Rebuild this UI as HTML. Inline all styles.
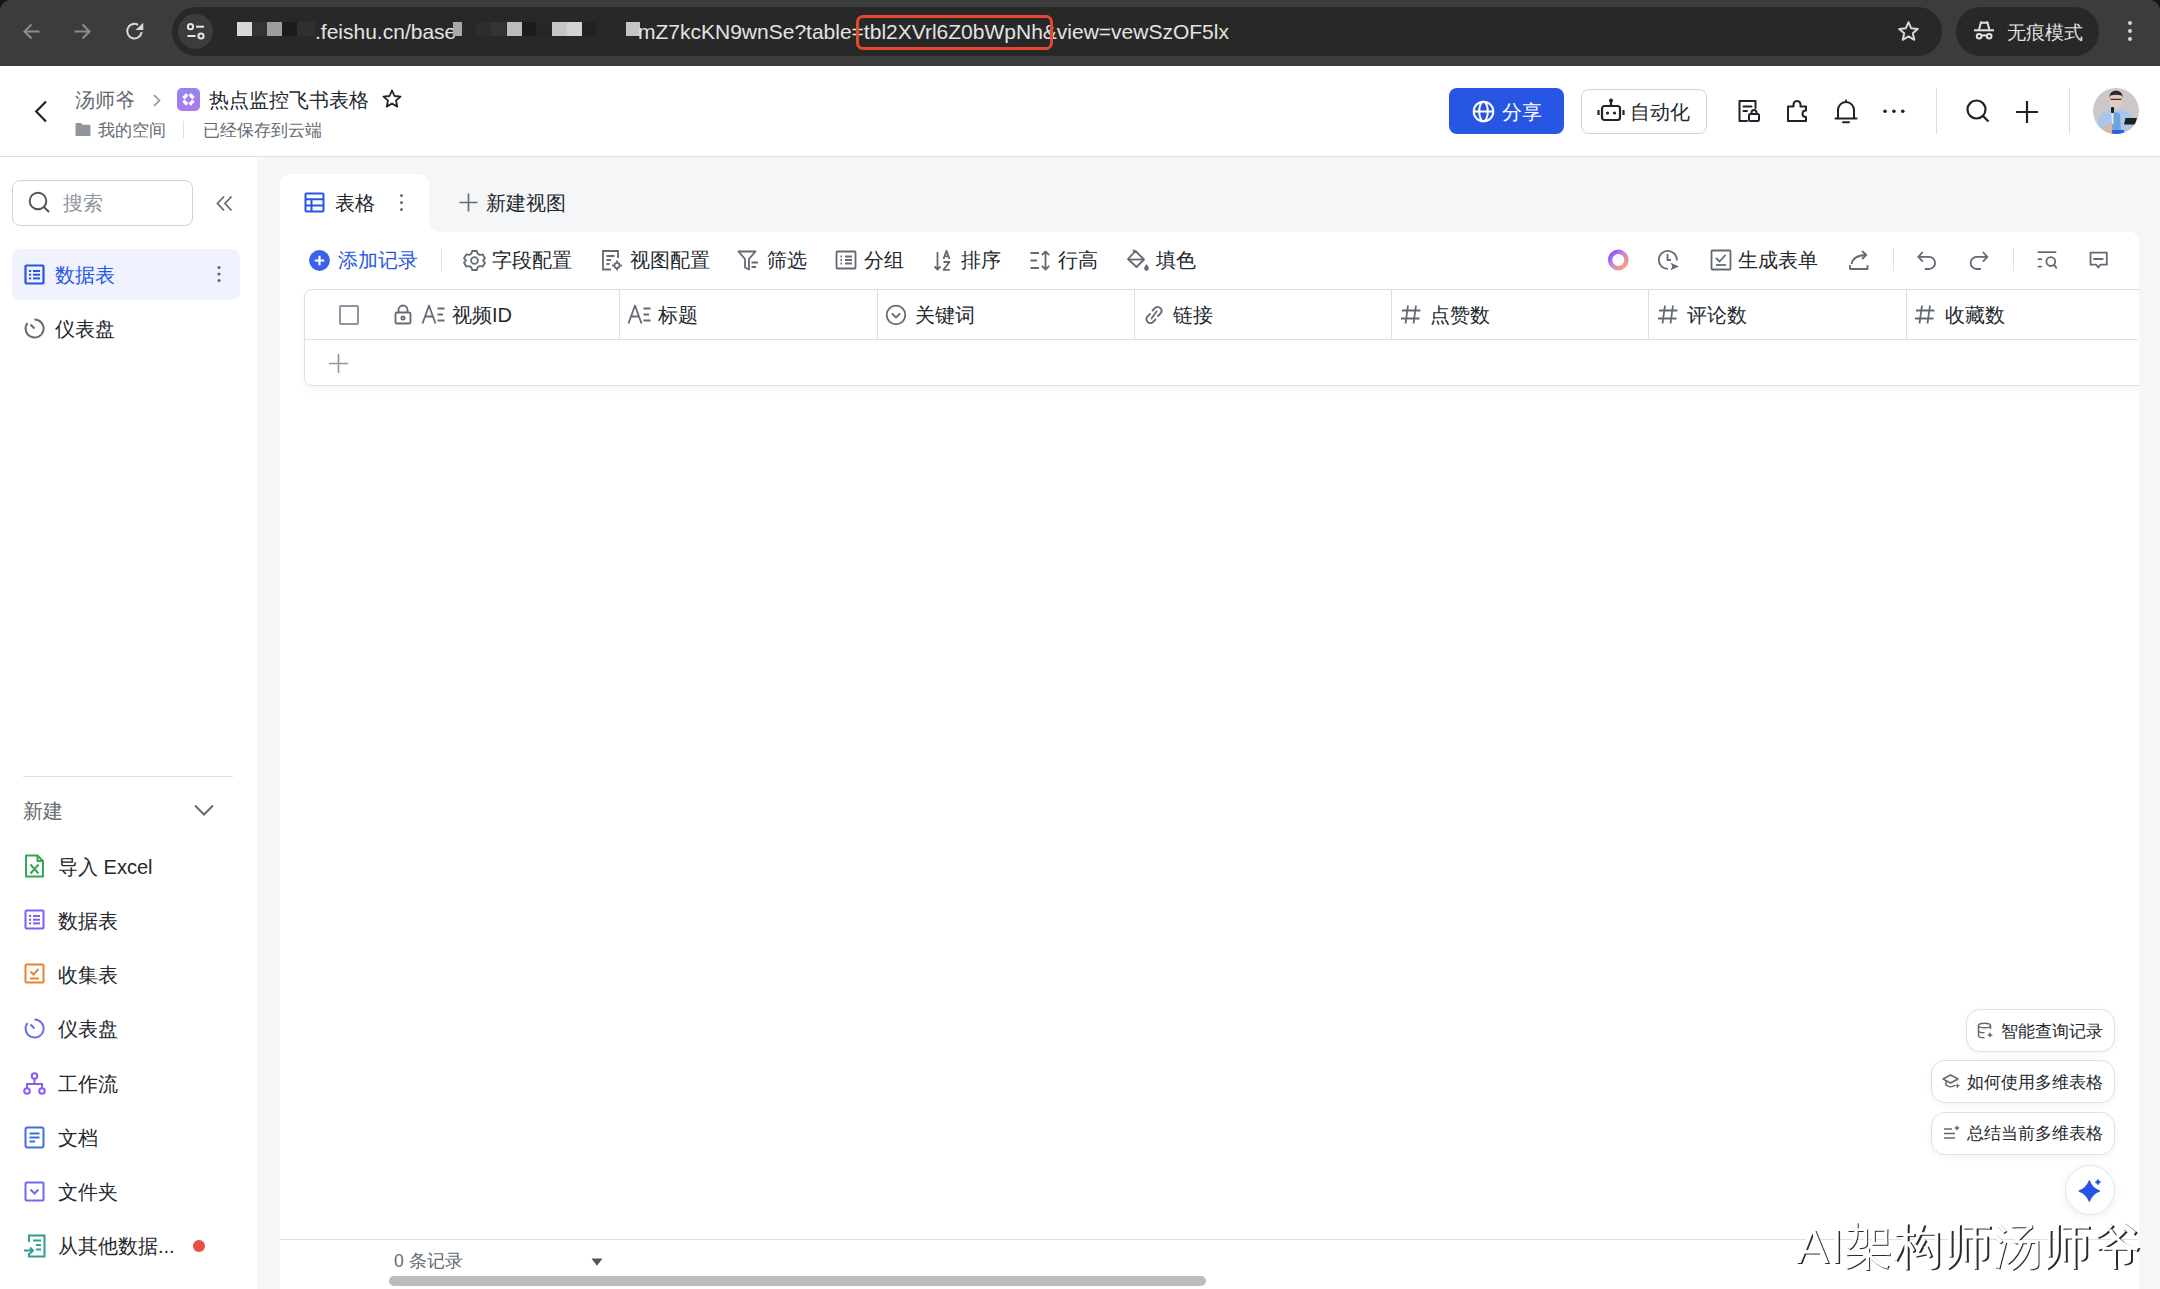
<!DOCTYPE html>
<html><head><meta charset="utf-8">
<style>
*{box-sizing:border-box;margin:0;padding:0}
html,body{width:2160px;height:1289px;overflow:hidden;background:#fff;font-family:"Liberation Sans",sans-serif;color:#24282e}
.a{position:absolute}
.t{position:absolute;white-space:nowrap;line-height:1}
svg{position:absolute;overflow:visible}
#chrome{left:0;top:0;width:2160px;height:66px;background:#3c3c3c}
#url{left:172px;top:7px;width:1770px;height:49px;border-radius:25px;background:#282828}
#hdr{left:0;top:66px;width:2160px;height:91px;background:#fff;border-bottom:1px solid #dee0e3}
#side{left:0;top:157px;width:257px;height:1132px;background:#fff}
#grey{left:257px;top:157px;width:1903px;height:1132px;background:#f5f6f8}
#card{left:280px;top:232px;width:1859px;height:1057px;background:#fff;border-radius:0 9px 0 0}
#tab{left:280px;top:174px;width:149px;height:62px;background:#fff;border-radius:10px 10px 0 0}
.g{color:#646a73}
</style></head><body>
<div id="chrome" class="a"></div>

<!-- CHROME -->
<div class="a" style="left:0;top:0;width:10px;height:10px;background:#151515;"></div>
<div class="a" style="left:0;top:0;width:20px;height:20px;background:#3c3c3c;border-radius:10px 0 0 0"></div>
<div class="a" style="left:2150px;top:0;width:10px;height:10px;background:#151515;"></div>
<div class="a" style="left:2140px;top:0;width:20px;height:20px;background:#3c3c3c;border-radius:0 10px 0 0"></div>
<svg style="left:22px;top:22px" width="19" height="19" viewBox="0 0 19 19"><path d="M17.5 9.5H2.5M9.5 2.5L2.5 9.5L9.5 16.5" fill="none" stroke="#8c8c8c" stroke-width="2"/></svg>
<svg style="left:73px;top:22px" width="19" height="19" viewBox="0 0 19 19"><path d="M1.5 9.5H16.5M9.5 2.5L16.5 9.5L9.5 16.5" fill="none" stroke="#8c8c8c" stroke-width="2"/></svg>
<svg style="left:125px;top:22px" width="19" height="19" viewBox="0 0 19 19"><path d="M16.7 10.2A7.3 7.3 0 1 1 13.05 2.78" fill="none" stroke="#d9d9d9" stroke-width="2"/><path d="M10.5 8L18.3 8L18.3 0.8Z" fill="#d9d9d9"/></svg>
<div id="url" class="a"></div>
<div class="a" style="left:178px;top:14px;width:35px;height:35px;border-radius:50%;background:#3c3c3c"></div>
<svg style="left:185px;top:21px" width="21" height="20" viewBox="0 0 21 20"><circle cx="5.5" cy="5.7" r="2.6" fill="none" stroke="#e6e6e6" stroke-width="2"/><path d="M11 5.7H19" stroke="#e6e6e6" stroke-width="2"/><circle cx="16" cy="15" r="2.6" fill="none" stroke="#e6e6e6" stroke-width="2"/><path d="M2.5 15H10.5" stroke="#e6e6e6" stroke-width="2"/></svg>
<div class="a" style="left:237px;top:22px;width:15px;height:14px;background:#d8d8d8"></div>
<div class="a" style="left:252px;top:22px;width:15px;height:14px;background:#333333"></div>
<div class="a" style="left:267px;top:22px;width:15px;height:14px;background:#9d9d9d"></div>
<div class="a" style="left:282px;top:22px;width:15px;height:14px;background:#1c1c1c"></div>
<div class="a" style="left:297px;top:22px;width:18px;height:14px;background:#303030"></div>
<div class="t" style="left:315px;top:21px;font-size:21px;color:#e3e3e3">.feishu.cn/base</div>
<div class="a" style="left:453px;top:22px;width:9px;height:14px;background:#a8a8a8"></div>
<div class="a" style="left:476px;top:22px;width:15px;height:14px;background:#2d2d2d"></div>
<div class="a" style="left:491px;top:22px;width:15px;height:14px;background:#343434"></div>
<div class="a" style="left:507px;top:22px;width:15px;height:14px;background:#bcbcbc"></div>
<div class="a" style="left:522px;top:22px;width:14px;height:14px;background:#1c1c1c"></div>
<div class="a" style="left:536px;top:22px;width:16px;height:14px;background:#262626"></div>
<div class="a" style="left:552px;top:22px;width:15px;height:14px;background:#c6c6c6"></div>
<div class="a" style="left:567px;top:22px;width:15px;height:14px;background:#d3d3d3"></div>
<div class="a" style="left:582px;top:22px;width:14px;height:14px;background:#222222"></div>
<div class="a" style="left:626px;top:22px;width:14px;height:14px;background:#c4c4c4"></div>
<div class="t" style="left:638px;top:21px;font-size:21px;color:#e3e3e3">mZ7kcKN9wnSe?table=tbl2XVrl6Z0bWpNh&amp;view=vewSzOF5lx</div>
<div class="a" style="left:856px;top:15px;width:197px;height:35px;border:3px solid #e5472f;border-radius:7px"></div>
<svg style="left:1897px;top:20px" width="23" height="23" viewBox="0 0 23 23"><path d="M11.5 2.2L14.2 8.3L20.8 8.9L15.8 13.3L17.3 19.8L11.5 16.4L5.7 19.8L7.2 13.3L2.2 8.9L8.8 8.3Z" fill="none" stroke="#d6d6d6" stroke-width="2" stroke-linejoin="round"/></svg>
<div class="a" style="left:1956px;top:7px;width:143px;height:49px;border-radius:25px;background:#282828"></div>
<svg style="left:1970px;top:18px" width="28" height="24" viewBox="0 0 28 24"><g fill="none" stroke="#e3e3e3" stroke-width="2" stroke-linejoin="round"><path d="M4 12.3H24"/><path d="M9 11.5L11 4.2Q14 5.4 17.4 4.2L19.3 11.5"/><circle cx="9.1" cy="18.2" r="2.3"/><circle cx="19.2" cy="18.2" r="2.3"/><path d="M11.4 17.9Q14.15 16.6 16.9 17.9"/></g></svg>
<div class="t" style="left:2007px;top:24px;font-size:18.5px;color:#e3e3e3">无痕模式</div>
<div class="a" style="left:2128px;top:21px;width:4px;height:4px;border-radius:2px;background:#d6d6d6"></div>
<div class="a" style="left:2128px;top:29px;width:4px;height:4px;border-radius:2px;background:#d6d6d6"></div>
<div class="a" style="left:2128px;top:37px;width:4px;height:4px;border-radius:2px;background:#d6d6d6"></div>

<div id="hdr" class="a"></div>
<!-- HEADER -->
<svg style="left:34px;top:100px" width="14" height="23" viewBox="0 0 14 23"><path d="M12 1.5L2.2 11.5L12 21.5" fill="none" stroke="#1f2329" stroke-width="2.2"/></svg>
<div class="t g" style="left:75px;top:90px;font-size:20px">汤师爷</div>
<svg style="left:152px;top:94px" width="10" height="13" viewBox="0 0 10 13"><path d="M2 1.2L7.5 6.5L2 11.8" fill="none" stroke="#8f959e" stroke-width="1.6"/></svg>
<div class="a" style="left:177px;top:88px;width:23px;height:23px;border-radius:5px;background:linear-gradient(160deg,#9384f4,#b07be9)"></div>
<svg style="left:177px;top:88px" width="23" height="23" viewBox="0 0 23 23"><g fill="#fff"><rect x="5.60" y="6.58" width="5.5" height="3.35" rx="0.7" transform="rotate(-45 8.35 8.25)"/><rect x="11.90" y="6.58" width="5.5" height="3.35" rx="0.7" transform="rotate(45 14.65 8.25)"/><rect x="11.90" y="12.88" width="5.5" height="3.35" rx="0.7" transform="rotate(-45 14.65 14.55)"/><rect x="5.60" y="12.88" width="5.5" height="3.35" rx="0.7" transform="rotate(45 8.35 14.55)"/></g></svg>
<div class="t" style="left:209px;top:90px;font-size:20px">热点监控飞书表格</div>
<svg style="left:381px;top:88px" width="22" height="22" viewBox="0 0 22 22"><path d="M11 2.5L13.5 8L19.5 8.6L15 12.6L16.3 18.6L11 15.5L5.7 18.6L7 12.6L2.5 8.6L8.5 8Z" fill="none" stroke="#1f2329" stroke-width="1.8" stroke-linejoin="round"/></svg>
<svg style="left:75px;top:122px" width="16" height="15" viewBox="0 0 16 15"><path d="M0.5 2.2Q0.5 1 1.7 1H6L7.5 2.8H14.3Q15.5 2.8 15.5 4V13Q15.5 14 14.3 14H1.7Q0.5 14 0.5 13Z" fill="#8f959e"/></svg>
<div class="t g" style="left:98px;top:122px;font-size:17px">我的空间</div>
<div class="a" style="left:183px;top:121px;width:1px;height:17px;background:#dee0e3"></div>
<div class="t g" style="left:203px;top:122px;font-size:17px">已经保存到云端</div>

<div class="a" style="left:1449px;top:88px;width:115px;height:46px;border-radius:8px;background:#2756e5"></div>
<svg style="left:1472px;top:100px" width="23" height="23" viewBox="0 0 23 23"><g fill="none" stroke="#fff" stroke-width="2"><circle cx="11.5" cy="11.5" r="9.8"/><ellipse cx="11.5" cy="11.5" rx="4.3" ry="9.8"/><path d="M1.7 11.5H21.3"/></g></svg>
<div class="t" style="left:1502px;top:102px;font-size:20px;color:#fff">分享</div>
<div class="a" style="left:1581px;top:89px;width:126px;height:45px;border-radius:8px;border:1px solid #d0d3d6;background:#fff"></div>
<svg style="left:1597px;top:98px" width="28" height="24" viewBox="0 0 28 24"><g fill="none" stroke="#1f2329" stroke-width="2.2"><rect x="5" y="8" width="18" height="14" rx="2.5"/><path d="M14 8V3"/><path d="M1.5 12V17M26.5 12V17"/></g><circle cx="14" cy="2.5" r="2" fill="#1f2329"/><circle cx="10.5" cy="15" r="1.6" fill="#1f2329"/><circle cx="17.5" cy="15" r="1.6" fill="#1f2329"/></svg>
<div class="t" style="left:1630px;top:102px;font-size:20px">自动化</div>
<svg style="left:1737px;top:99px" width="24" height="24" viewBox="0 0 24 24"><g fill="none" stroke="#1f2329" stroke-width="2" stroke-linejoin="round" stroke-linecap="round"><path d="M10 22H2.5V2H18.5V9"/><path d="M6.5 7.5H14.5"/><path d="M6.5 12H10"/><rect x="12" y="15" width="10" height="7" rx="1.3"/><path d="M14.5 15V13.5A2.5 2.5 0 0 1 19.5 13.5V15"/></g></svg>
<svg style="left:1786px;top:99px" width="23" height="24" viewBox="0 0 23 24"><path d="M2 7.5H7.5Q7 2 11 2Q15 2 14.5 7.5H20V11.5Q16.5 11.5 16.5 14.75Q16.5 18 20 18V22H2Z" fill="none" stroke="#1f2329" stroke-width="2" stroke-linejoin="round" stroke-linecap="round" stroke-linejoin="round"/></svg>
<svg style="left:1834px;top:99px" width="24" height="25" viewBox="0 0 24 25"><g fill="none" stroke="#1f2329" stroke-width="2" stroke-linejoin="round" stroke-linecap="round"><path d="M4 19V11A8 8 0 0 1 20 11V19"/><path d="M1.5 19.5H22.5"/><path d="M9 23.2H15"/><path d="M12 1.5V3"/></g></svg>
<svg style="left:1880px;top:107px" width="28" height="8" viewBox="0 0 28 8"><g fill="#1f2329"><circle cx="5" cy="4.2" r="1.8"/><circle cx="13.9" cy="4.2" r="1.8"/><circle cx="22.8" cy="4.2" r="1.8"/></g></svg>
<div class="a" style="left:1936px;top:88px;width:1px;height:46px;background:#dee0e3"></div>
<svg style="left:1966px;top:99px" width="24" height="24" viewBox="0 0 24 24"><g fill="none" stroke="#1f2329" stroke-width="2.2"><circle cx="10.5" cy="10.5" r="9"/><path d="M17 17L22.5 22.5"/></g></svg>
<svg style="left:2015px;top:100px" width="24" height="24" viewBox="0 0 24 24"><path d="M12 1V23M1 12H23" fill="none" stroke="#1f2329" stroke-width="2.2"/></svg>
<div class="a" style="left:2069px;top:88px;width:1px;height:46px;background:#dee0e3"></div>
<svg style="left:2093px;top:88px;filter:blur(0.5px)" width="46" height="46" viewBox="0 0 46 46"><defs><clipPath id="avc"><circle cx="23" cy="23" r="23"/></clipPath></defs><g clip-path="url(#avc)">
<rect width="46" height="46" fill="#cdc8c7"/>
<path d="M4 46L5 31Q8 24 15 22.5L19 22L27 21.5L33 23Q38 25 40 31L42 46Z" fill="#aac6e8"/>
<path d="M19 26L23 24L27 26L28 46H17Z" fill="#6ea3e2"/>
<path d="M10 46L11 38Q16 35 19 37L20 46Z" fill="#d9b8aa"/>
<rect x="17" y="5.5" width="12" height="15" rx="5.5" fill="#e6cbbd"/>
<path d="M16.5 10Q16 3 23 2.5Q30 3 29.5 10L28.5 7.5Q23 6 17.5 7.5Z" fill="#2d2825"/>
<path d="M17.5 11.3H28.5" stroke="#3a3330" stroke-width="1.2"/>
<rect x="18" y="19" width="3" height="6" rx="1" fill="#1d1d1d"/>
<rect x="18.5" y="25" width="2" height="11" fill="#e8e8ea"/>
<path d="M32.5 30H44L42 36.5H31Z" fill="#202020"/>
<rect x="19" y="42" width="12" height="4" fill="#2d5fd6"/>
</g></svg>
</div>

<div id="side" class="a"></div>
<!-- SIDEBAR -->
<div class="a" style="left:12px;top:180px;width:181px;height:46px;border-radius:8px;border:1px solid #d0d3d6"></div>
<svg style="left:28px;top:191px" width="23" height="23" viewBox="0 0 23 23"><g fill="none" stroke="#4e5358" stroke-width="1.9"><circle cx="10" cy="10" r="8.3"/><path d="M16 16L21 21"/></g></svg>
<div class="t" style="left:63px;top:193px;font-size:20px;color:#8f959e">搜索</div>
<svg style="left:215px;top:195px" width="19" height="17" viewBox="0 0 19 17"><path d="M9 1.5L2.5 8.5L9 15.5M16.5 1.5L10 8.5L16.5 15.5" fill="none" stroke="#646a73" stroke-width="1.8"/></svg>
<div class="a" style="left:12px;top:249px;width:228px;height:51px;border-radius:8px;background:#f0f3fe"></div>
<svg style="left:24px;top:264px" width="21" height="21" viewBox="0 0 21 21"><g fill="none" stroke="#2756e5" stroke-width="2.2"><rect x="1.5" y="1.5" width="18" height="18" rx="1"/></g><g fill="#2756e5"><rect x="5" y="6" width="2.2" height="2"/><rect x="9" y="6" width="7" height="2"/><rect x="5" y="9.7" width="2.2" height="2"/><rect x="9" y="9.7" width="7" height="2"/><rect x="5" y="13.4" width="2.2" height="2"/><rect x="9" y="13.4" width="7" height="2"/></g></svg>
<div class="t" style="left:55px;top:265px;font-size:20px;color:#2756e5">数据表</div>
<svg style="left:214px;top:262px" width="10" height="24" viewBox="0 0 10 24"><g fill="#646a73"><circle cx="5" cy="5.5" r="1.6"/><circle cx="5" cy="12" r="1.6"/><circle cx="5" cy="18.5" r="1.6"/></g></svg>
<svg style="left:24px;top:318px" width="21" height="21" viewBox="0 0 21 21"><g fill="none" stroke="#646a73" stroke-width="2"><path d="M10.5 1.5A9 9 0 1 1 3.5 5"/><path d="M6.5 6.5L10.5 10.5"/></g></svg>
<div class="t" style="left:55px;top:319px;font-size:20px">仪表盘</div>

<div class="a" style="left:23px;top:776px;width:210px;height:1px;background:#dee0e3"></div>
<div class="t g" style="left:23px;top:801px;font-size:20px">新建</div>
<svg style="left:193px;top:803px" width="22" height="14" viewBox="0 0 22 14"><path d="M2 2.5L11 11.5L20 2.5" fill="none" stroke="#646a73" stroke-width="2"/></svg>

<svg style="left:24px;top:854px" width="21" height="24" viewBox="0 0 21 24"><g fill="none" stroke="#34a853" stroke-width="2" stroke-linejoin="round"><path d="M2 1.5H13.5L19 7V22.5H2Z"/><path d="M13.5 1.5V7H19"/><path d="M6.5 10.5L14.5 19.5M14.5 10.5L6.5 19.5"/></g></svg>
<div class="t" style="left:58px;top:857px;font-size:20px">导入 Excel</div>
<svg style="left:24px;top:909px" width="21" height="21" viewBox="0 0 21 21"><g fill="none" stroke="#7f5ff0" stroke-width="2"><rect x="1.5" y="1.5" width="18" height="18" rx="1"/></g><g fill="#7f5ff0"><rect x="5" y="6" width="2.2" height="2"/><rect x="9" y="6" width="7" height="2"/><rect x="5" y="9.7" width="2.2" height="2"/><rect x="9" y="9.7" width="7" height="2"/><rect x="5" y="13.4" width="2.2" height="2"/><rect x="9" y="13.4" width="7" height="2"/></g></svg>
<div class="t" style="left:58px;top:911px;font-size:20px">数据表</div>
<svg style="left:24px;top:963px" width="21" height="21" viewBox="0 0 21 21"><g fill="none" stroke="#e6832d" stroke-width="2"><rect x="1.5" y="1.5" width="18" height="18" rx="1"/><path d="M6.5 8.5L9.5 11.5L14.5 6"/><path d="M6 15.5H15"/></g></svg>
<div class="t" style="left:58px;top:965px;font-size:20px">收集表</div>
<svg style="left:24px;top:1018px" width="21" height="21" viewBox="0 0 21 21"><g fill="none" stroke="#6b6cf0" stroke-width="2"><path d="M10.5 1.5A9 9 0 1 1 3.5 5"/><path d="M6.5 6.5L10.5 10.5"/></g></svg>
<div class="t" style="left:58px;top:1019px;font-size:20px">仪表盘</div>
<svg style="left:23px;top:1072px" width="23" height="23" viewBox="0 0 23 23"><g fill="none" stroke="#8a5cf0" stroke-width="2"><circle cx="11.5" cy="4" r="2.8"/><circle cx="4" cy="19" r="2.8"/><circle cx="19" cy="19" r="2.8"/><path d="M11.5 6.8V12M4 16.2V12H19V16.2"/></g></svg>
<div class="t" style="left:58px;top:1074px;font-size:20px">工作流</div>
<svg style="left:24px;top:1126px" width="21" height="23" viewBox="0 0 21 23"><g fill="none" stroke="#3f6ee8" stroke-width="2"><rect x="1.5" y="1.5" width="18" height="20" rx="2"/><path d="M5.5 7.5H15.5M5.5 11.5H15.5M5.5 15.5H11"/></g></svg>
<div class="t" style="left:58px;top:1128px;font-size:20px">文档</div>
<svg style="left:24px;top:1181px" width="21" height="21" viewBox="0 0 21 21"><g fill="none" stroke="#6b6cf0" stroke-width="2"><rect x="1.5" y="1.5" width="18" height="18" rx="1"/><path d="M6.5 8.5L10.5 12.5L14.5 8.5"/></g></svg>
<div class="t" style="left:58px;top:1182px;font-size:20px">文件夹</div>
<svg style="left:23px;top:1234px" width="23" height="24" viewBox="0 0 23 24"><g fill="none" stroke="#2f9e8f" stroke-width="2"><path d="M6 8V1.5H21.5V22.5H6V19"/><path d="M10 6.5H18M13 11H18M13 15.5H18"/><path d="M1 16.5H10M7 13.5L10 16.5L7 19.5"/></g></svg>
<div class="t" style="left:58px;top:1236px;font-size:20px">从其他数据...</div>
<div class="a" style="left:193px;top:1240px;width:12px;height:12px;border-radius:50%;background:#e84d3d"></div>

<div id="grey" class="a"></div>
<div id="tab" class="a"></div>
<div id="card" class="a"></div>
<div id="card" class="a"></div>
<div class="a" style="left:429px;top:220px;width:12px;height:13px;background:#fff"></div>
<div class="a" style="left:429px;top:208px;width:24px;height:24px;border-radius:0 0 0 12px;background:#f5f6f8"></div>
<!-- TAB -->
<svg style="left:304px;top:192px" width="21" height="21" viewBox="0 0 21 21"><g fill="none" stroke="#2756e5" stroke-width="2"><rect x="1.5" y="1.5" width="18" height="18" rx="1"/><path d="M1.5 7.3H19.5M1.5 13.5H19.5M7.5 7.3V19.5"/></g></svg>
<div class="t" style="left:335px;top:193px;font-size:20px">表格</div>
<div class="a" style="left:400px;top:194px;width:3px;height:3px;border-radius:2px;background:#646a73"></div>
<div class="a" style="left:400px;top:201px;width:3px;height:3px;border-radius:2px;background:#646a73"></div>
<div class="a" style="left:400px;top:208px;width:3px;height:3px;border-radius:2px;background:#646a73"></div>
<svg style="left:458px;top:192px" width="21" height="21" viewBox="0 0 21 21"><path d="M10.5 1.5V19.5M1.5 10.5H19.5" fill="none" stroke="#646a73" stroke-width="1.7"/></svg>
<div class="t" style="left:486px;top:193px;font-size:20px">新建视图</div>

<!-- TOOLBAR -->
<svg style="left:309px;top:250px" width="21" height="21" viewBox="0 0 21 21"><circle cx="10.5" cy="10.5" r="10.4" fill="#3a63ea"/><path d="M10.5 5.8V15.2M5.8 10.5H15.2" stroke="#fff" stroke-width="2.2"/></svg>
<div class="t" style="left:338px;top:250px;font-size:20px;color:#2756e5">添加记录</div>
<div class="a" style="left:441px;top:249px;width:1px;height:22px;background:#dee0e3"></div>
<svg style="left:463px;top:249px" width="23" height="23" viewBox="0 0 23 23"><g fill="none" stroke="#646a73" stroke-width="1.8" stroke-linejoin="round"><path d="M9.2 2H13.8L14.6 4.6L17 6L19.6 5.3L21.9 9.3L20 11.5L21.9 13.7L19.6 17.7L17 17L14.6 18.4L13.8 21H9.2L8.4 18.4L6 17L3.4 17.7L1.1 13.7L3 11.5L1.1 9.3L3.4 5.3L6 6L8.4 4.6Z"/><circle cx="11.5" cy="11.5" r="3.4"/></g></svg>
<div class="t" style="left:492px;top:250px;font-size:20px">字段配置</div>
<svg style="left:601px;top:249px" width="22" height="23" viewBox="0 0 22 23"><g fill="none" stroke="#646a73" stroke-width="1.8"><path d="M10 20.5H2V2H17V9"/><path d="M5.5 7H13.5M5.5 11H10M5.5 15H8.5"/><circle cx="16" cy="16.5" r="2.6"/><path d="M16 11.5V13.2M16 19.8V21.5M11 16.5H12.7M19.3 16.5H21"/></g></svg>
<div class="t" style="left:630px;top:250px;font-size:20px">视图配置</div>
<svg style="left:737px;top:249px" width="23" height="23" viewBox="0 0 23 23"><g fill="none" stroke="#646a73" stroke-width="1.8" stroke-linejoin="round"><path d="M1.5 2.5H18.5L12 10V20.5L8 18.5V10Z"/><path d="M14.5 13.5H21M14.5 18H19"/></g></svg>
<div class="t" style="left:767px;top:250px;font-size:20px">筛选</div>
<svg style="left:835px;top:249px" width="23" height="23" viewBox="0 0 23 23"><g fill="none" stroke="#646a73" stroke-width="1.8"><rect x="1.5" y="2.5" width="19" height="17" rx="1"/><path d="M5.5 7.5H7M10 7.5H17M5.5 11H7M10 11H17M5.5 14.5H7M10 14.5H17"/></g></svg>
<div class="t" style="left:864px;top:250px;font-size:20px">分组</div>
<svg style="left:933px;top:249px" width="22" height="23" viewBox="0 0 22 23"><g fill="none" stroke="#646a73" stroke-width="1.8" stroke-linejoin="round"><path d="M4.5 3V20.5M1.5 17.5L4.5 20.5L7.5 17.5"/><path d="M10.5 10L13.5 1.8L16.5 10M11.5 7.3H15.5"/><path d="M10.5 13H16.5L10.5 20.8H16.8"/></g></svg>
<div class="t" style="left:961px;top:250px;font-size:20px">排序</div>
<svg style="left:1029px;top:249px" width="23" height="23" viewBox="0 0 23 23"><g fill="none" stroke="#646a73" stroke-width="1.8" stroke-linejoin="round"><path d="M1.5 4H10M1.5 11.5H8M1.5 19H10"/><path d="M16.5 2.5V20.5M12.8 6.2L16.5 2.5L20.2 6.2M12.8 16.8L16.5 20.5L20.2 16.8"/></g></svg>
<div class="t" style="left:1058px;top:250px;font-size:20px">行高</div>
<svg style="left:1126px;top:249px" width="24" height="23" viewBox="0 0 24 23"><g fill="none" stroke="#646a73" stroke-width="1.8" stroke-linejoin="round"><path d="M9.5 2L18 10.5L10.5 18L2 10L9.5 2Z"/><path d="M2.5 10.5H18"/><path d="M7 1L9.5 3.5"/></g><path d="M20.5 15Q22.8 18 22.8 19.5A2.3 2.3 0 0 1 18.2 19.5Q18.2 18 20.5 15Z" fill="#646a73"/></svg>
<div class="t" style="left:1156px;top:250px;font-size:20px">填色</div>

<svg style="left:1606px;top:248px" width="24" height="24" viewBox="0 0 24 24"><defs><linearGradient id="ai" x1="0.1" y1="0.1" x2="0.9" y2="0.9"><stop offset="0" stop-color="#8a5cf6"/><stop offset="0.45" stop-color="#c58ae0"/><stop offset="1" stop-color="#f7a071"/></linearGradient></defs><circle cx="12.3" cy="12" r="8.2" fill="none" stroke="url(#ai)" stroke-width="4.4"/></svg>
<svg style="left:1657px;top:248px" width="24" height="24" viewBox="0 0 24 24"><g fill="none" stroke="#646a73" stroke-width="1.8" stroke-linejoin="round"><path d="M19.8 12.5A9 9 0 1 0 11 20.9"/><path d="M10.5 6V12H14"/></g><path d="M13.5 14.8L22 18.5L13.5 22.2L15.3 18.5Z" fill="#646a73"/></svg>
<svg style="left:1710px;top:249px" width="22" height="22" viewBox="0 0 22 22"><g fill="none" stroke="#646a73" stroke-width="1.8"><rect x="1.5" y="1.5" width="19" height="19" rx="1"/><path d="M6 9L9.5 12.5L15.5 6"/><path d="M6 16H16"/></g></svg>
<div class="t" style="left:1738px;top:250px;font-size:20px">生成表单</div>
<svg style="left:1848px;top:249px" width="22" height="23" viewBox="0 0 22 23"><g fill="none" stroke="#646a73" stroke-width="1.8" stroke-linejoin="round"><path d="M2 16V20H19.5V16"/><path d="M3.5 15Q5 6.5 18 6"/><path d="M14 2L18.3 6L14 10"/></g></svg>
<div class="a" style="left:1893px;top:248px;width:1px;height:23px;background:#dee0e3"></div>
<svg style="left:1916px;top:250px" width="23" height="23" viewBox="0 0 23 23"><g fill="none" stroke="#646a73" stroke-width="1.8" stroke-linejoin="round" stroke-linecap="round"><path d="M6.3 2.5L2.4 6.8L6.3 11.1"/><path d="M2.4 6.8H13A6.1 6.1 0 0 1 13 19H9.5"/></g></svg>
<svg style="left:1967px;top:250px" width="23" height="23" viewBox="0 0 23 23"><g fill="none" stroke="#646a73" stroke-width="1.8" stroke-linejoin="round" stroke-linecap="round"><path d="M16.4 2.5L20.3 6.8L16.4 11.1"/><path d="M20.3 6.8H9.7A6.1 6.1 0 0 0 9.7 19H13.2"/></g></svg>
<div class="a" style="left:2013px;top:248px;width:1px;height:23px;background:#dee0e3"></div>
<svg style="left:2035px;top:249px" width="24" height="23" viewBox="0 0 24 23"><g fill="none" stroke="#646a73" stroke-width="1.8" stroke-linecap="round"><path d="M3.5 3.2H20.5M3.5 10.2H6.3M3.5 17.6H6.3"/><circle cx="15.8" cy="12.6" r="4.4"/><path d="M19 15.9L21.3 18.9"/></g></svg>
<svg style="left:2086px;top:249px" width="24" height="23" viewBox="0 0 24 23"><g fill="none" stroke="#646a73" stroke-width="1.8" stroke-linejoin="round" stroke-linecap="round"><path d="M4.5 3.6H20.8V15.7H14.4L12.3 18.4L10.2 15.7H4.5Z"/><path d="M8 10H16.7"/></g></svg>

<!-- TABLE -->
<div class="a" style="left:304px;top:289px;width:1850px;height:97px;border:1px solid #dee0e3;border-radius:8px 0 0 8px;box-shadow:0 4px 8px rgba(31,35,41,0.04)"></div>
<div class="a" style="left:304px;top:339px;width:1834px;height:1px;background:#dee0e3"></div>
<div class="a" style="left:619px;top:290px;width:1px;height:49px;background:#dee0e3"></div>
<div class="a" style="left:877px;top:290px;width:1px;height:49px;background:#dee0e3"></div>
<div class="a" style="left:1134px;top:290px;width:1px;height:49px;background:#dee0e3"></div>
<div class="a" style="left:1391px;top:290px;width:1px;height:49px;background:#dee0e3"></div>
<div class="a" style="left:1648px;top:290px;width:1px;height:49px;background:#dee0e3"></div>
<div class="a" style="left:1906px;top:290px;width:1px;height:49px;background:#dee0e3"></div>
<div class="a" style="left:339px;top:305px;width:20px;height:20px;border:2px solid #8f959e;border-radius:2px"></div>
<svg style="left:394px;top:304px" width="18" height="21" viewBox="0 0 18 21"><g fill="none" stroke="#646a73" stroke-width="1.8"><rect x="1.5" y="8.5" width="15" height="11" rx="1.5"/><path d="M4.5 8.5V6A4.5 4.5 0 0 1 13.5 6V8.5"/><circle cx="9" cy="14" r="1.6"/></g></svg>
<svg style="left:421px;top:304px" width="25" height="21" viewBox="0 0 25 21"><g fill="none" stroke="#646a73" stroke-width="1.8" stroke-linejoin="round"><path d="M1.5 19.5L8 1.5L14.5 19.5M4 12.5H12"/><path d="M16.5 4.5H23.5M16.5 10.5H22M16.5 16.5H23.5"/></g></svg>
<div class="t" style="left:452px;top:305px;font-size:20px">视频ID</div>
<svg style="left:627px;top:304px" width="25" height="21" viewBox="0 0 25 21"><g fill="none" stroke="#646a73" stroke-width="1.8" stroke-linejoin="round"><path d="M1.5 19.5L8 1.5L14.5 19.5M4 12.5H12"/><path d="M16.5 4.5H23.5M16.5 10.5H22M16.5 16.5H23.5"/></g></svg>
<div class="t" style="left:658px;top:305px;font-size:20px">标题</div>
<svg style="left:885px;top:304px" width="22" height="22" viewBox="0 0 22 22"><g fill="none" stroke="#646a73" stroke-width="1.8"><circle cx="11" cy="11" r="9.3"/><path d="M7 9.5L11 13.5L15 9.5"/></g></svg>
<div class="t" style="left:915px;top:305px;font-size:20px">关键词</div>
<svg style="left:1144px;top:304px" width="20" height="22" viewBox="0 0 20 22"><g fill="none" stroke="#646a73" stroke-width="1.8" stroke-linecap="round"><path d="M8.5 6.5L11.5 3.5A4 4 0 0 1 17 9L14 12"/><path d="M11.5 15.5L8.5 18.5A4 4 0 0 1 3 13L6 10"/><path d="M7.5 14.5L12.5 7.5"/></g></svg>
<div class="t" style="left:1173px;top:305px;font-size:20px">链接</div>
<svg style="left:1400px;top:304px" width="22" height="21" viewBox="0 0 22 21"><g fill="none" stroke="#646a73" stroke-width="1.8"><path d="M8 1.5L5.5 19.5M16 1.5L13.5 19.5M2 6.5H20.5M1 14.5H19.5"/></g></svg>
<div class="t" style="left:1430px;top:305px;font-size:20px">点赞数</div>
<svg style="left:1657px;top:304px" width="22" height="21" viewBox="0 0 22 21"><g fill="none" stroke="#646a73" stroke-width="1.8"><path d="M8 1.5L5.5 19.5M16 1.5L13.5 19.5M2 6.5H20.5M1 14.5H19.5"/></g></svg>
<div class="t" style="left:1687px;top:305px;font-size:20px">评论数</div>
<svg style="left:1914px;top:304px" width="22" height="21" viewBox="0 0 22 21"><g fill="none" stroke="#646a73" stroke-width="1.8"><path d="M8 1.5L5.5 19.5M16 1.5L13.5 19.5M2 6.5H20.5M1 14.5H19.5"/></g></svg>
<div class="t" style="left:1945px;top:305px;font-size:20px">收藏数</div>
<svg style="left:328px;top:353px" width="21" height="21" viewBox="0 0 21 21"><path d="M10.5 1V20M1 10.5H20" fill="none" stroke="#8f959e" stroke-width="1.6"/></svg>
<div class="a" style="left:2139px;top:157px;width:21px;height:1132px;background:#f5f6f8"></div>

<!-- FOOTER -->
<div class="a" style="left:280px;top:1239px;width:1858px;height:1px;background:#dee0e3"></div>
<div class="t g" style="left:394px;top:1253px;font-size:17.5px">0 条记录</div>
<svg style="left:590px;top:1257px" width="14" height="10" viewBox="0 0 14 10"><path d="M1.5 1.5H12.5L7 8.8Z" fill="#51565d"/></svg>
<div class="a" style="left:389px;top:1276px;width:817px;height:10px;border-radius:5px;background:#bbbcbe"></div>

<!-- AI BUTTONS -->
<div class="a" style="left:1966px;top:1009px;width:149px;height:43px;border-radius:14px;border:1px solid #dee0e3;background:#fff;box-shadow:0 2px 6px rgba(31,35,41,0.05)"></div>
<svg style="left:1977px;top:1022px" width="17" height="17" viewBox="0 0 17 17"><g fill="none" stroke="#646a73" stroke-width="1.5"><ellipse cx="7.5" cy="3.5" rx="6" ry="2.3"/><path d="M1.5 3.5V13.5Q1.5 15.8 7.5 15.8M13.5 3.5V7M1.5 8.5Q1.5 10.8 7.5 10.8"/></g><path d="M13 10L13.9 12.1L16 13L13.9 13.9L13 16L12.1 13.9L10 13L12.1 12.1Z" fill="#646a73"/></svg>
<div class="t" style="left:2001px;top:1023px;font-size:17px">智能查询记录</div>
<div class="a" style="left:1931px;top:1060px;width:184px;height:43px;border-radius:14px;border:1px solid #dee0e3;background:#fff;box-shadow:0 2px 6px rgba(31,35,41,0.05)"></div>
<svg style="left:1942px;top:1073px" width="19" height="17" viewBox="0 0 19 17"><g fill="none" stroke="#646a73" stroke-width="1.5" stroke-linejoin="round"><path d="M1 6L8.5 2L16 6L8.5 10Z"/><path d="M4 7.5V12Q8.5 15.5 13 12"/></g><path d="M15.5 10L16.3 12L18.3 12.8L16.3 13.6L15.5 15.6L14.7 13.6L12.7 12.8L14.7 12Z" fill="#646a73"/></svg>
<div class="t" style="left:1967px;top:1074px;font-size:17px">如何使用多维表格</div>
<div class="a" style="left:1931px;top:1112px;width:184px;height:43px;border-radius:14px;border:1px solid #dee0e3;background:#fff;box-shadow:0 2px 6px rgba(31,35,41,0.05)"></div>
<svg style="left:1943px;top:1124px" width="18" height="17" viewBox="0 0 18 17"><g fill="none" stroke="#646a73" stroke-width="1.5"><path d="M1 5H9M1 9.5H12M1 14H12"/></g><path d="M14 1L14.9 3.1L17 4L14.9 4.9L14 7L13.1 4.9L11 4L13.1 3.1Z" fill="#646a73"/></svg>
<div class="t" style="left:1967px;top:1125px;font-size:17px">总结当前多维表格</div>
<div class="a" style="left:2065px;top:1165px;width:50px;height:50px;border-radius:50%;border:1px solid #e4e5e7;background:#fff;box-shadow:0 2px 8px rgba(31,35,41,0.08)"></div>
<svg style="left:2076px;top:1177px" width="28" height="28" viewBox="0 0 28 28"><path d="M13.3 4Q15.9 11.4 23.3 14Q15.9 16.6 13.3 24Q10.7 16.6 3.3 14Q10.7 11.4 13.3 4Z" fill="#2755e3" stroke="#2755e3" stroke-width="1.4" stroke-linejoin="round"/><path d="M21.9 2.5Q22.6 4.4 24.5 5.1Q22.6 5.8 21.9 7.7Q21.2 5.8 19.3 5.1Q21.2 4.4 21.9 2.5Z" fill="#2755e3" stroke="#2755e3" stroke-width="1" stroke-linejoin="round"/></svg>

<!-- WATERMARK -->
<div class="t" style="left:1796px;top:1222px;font-size:49px;font-weight:300;color:#fff;text-shadow:1.6px 1.2px 0 #2a2a2a;letter-spacing:0.7px">AI架构师汤师爷</div>
</body></html>
